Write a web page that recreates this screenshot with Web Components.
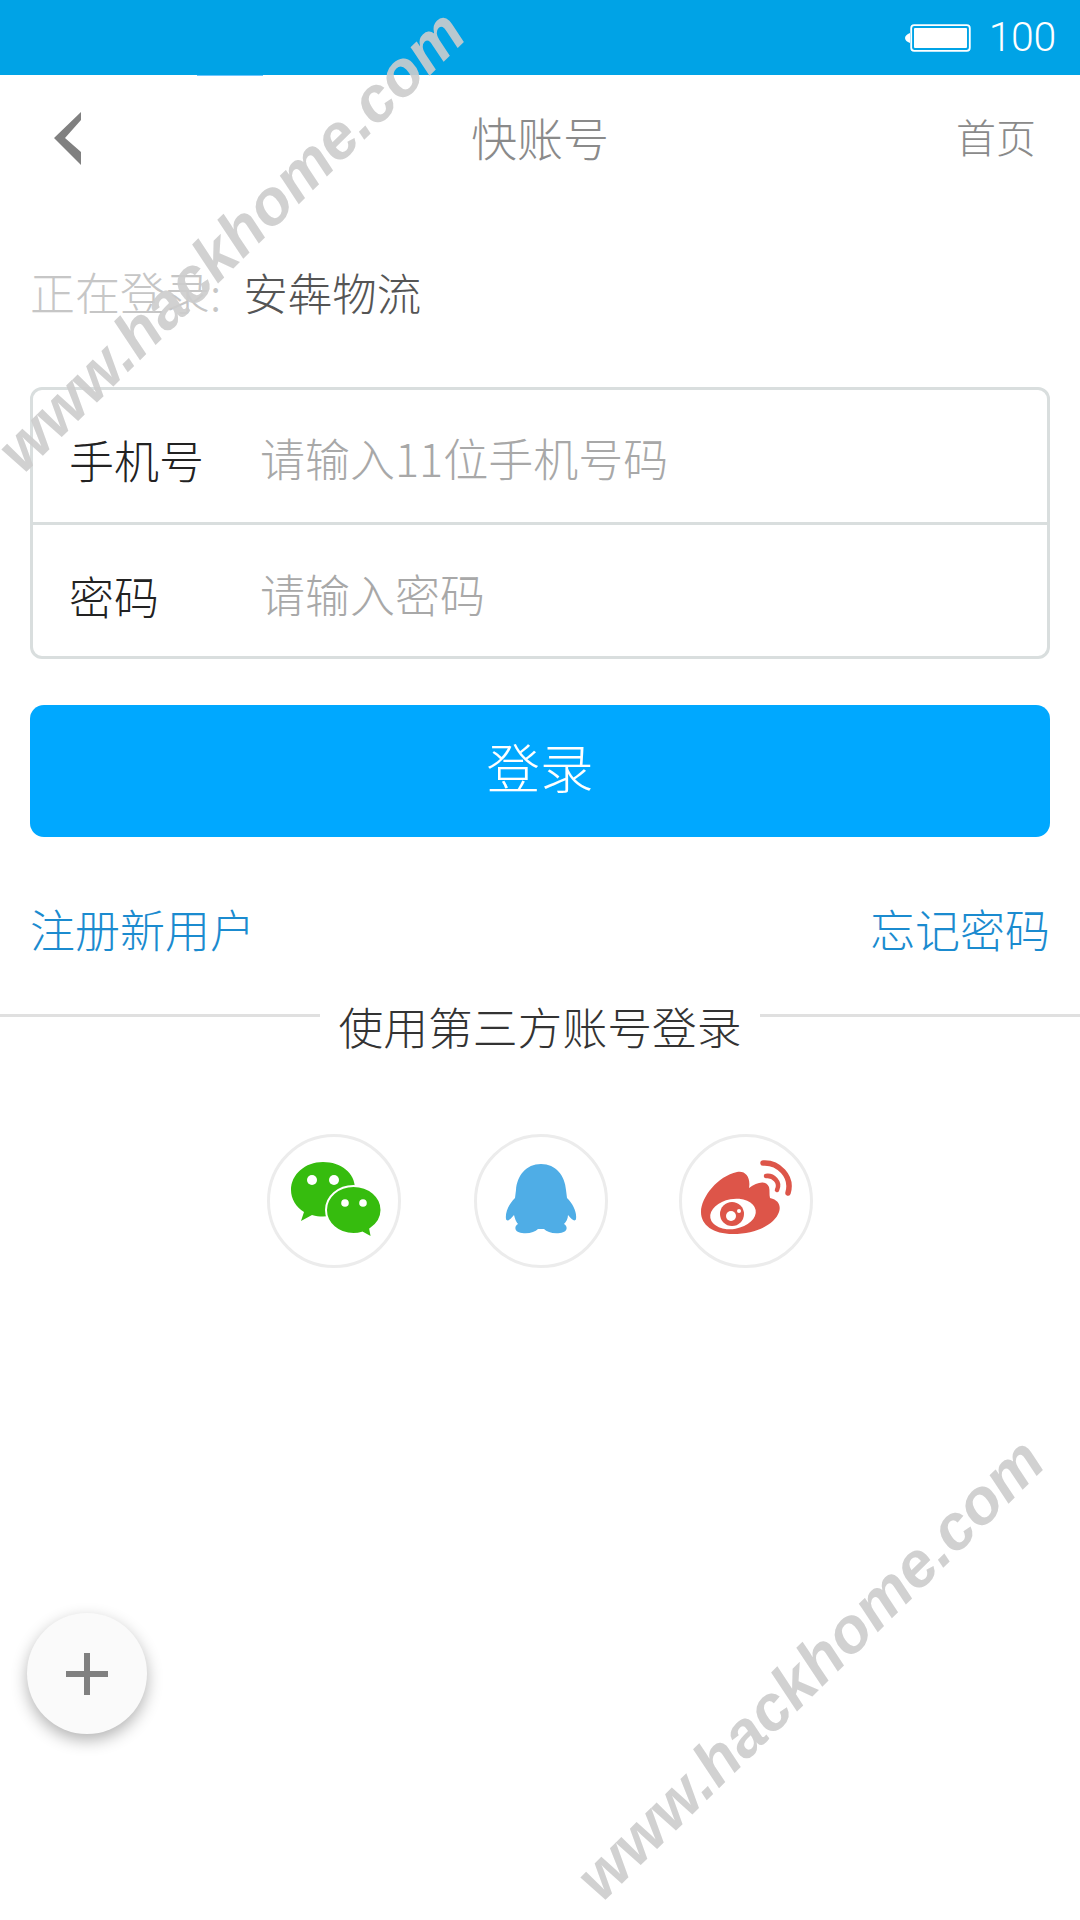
<!DOCTYPE html>
<html lang="zh"><head><meta charset="utf-8"><title>快账号</title>
<style>
html,body{margin:0;padding:0;background:#fff}
body{width:1080px;height:1920px;overflow:hidden;position:relative;font-family:"Noto Sans CJK SC","Noto Sans",sans-serif;font-weight:300}
</style></head><body>
<app-status></app-status>
<app-nav></app-nav>
<login-form></login-form>
<third-party></third-party>
<fab-plus></fab-plus>
<water-mark style="--x:231px;--y:241px"></water-mark>
<water-mark style="--x:810px;--y:1669px"></water-mark>
<script>
function def(name, html){
  customElements.define(name, class extends HTMLElement{
    constructor(){super();this.attachShadow({mode:'open'}).innerHTML=html;}
  });
}
def('app-status',`<style>
:host{display:flex;height:75px;background:#00a3e6;align-items:center;justify-content:flex-end;padding-right:24px;position:relative;box-sizing:border-box}
svg{display:block;margin-right:18px}
span{font:300 41px/75px Roboto,"Open Sans",sans-serif;color:#fff;letter-spacing:-.3px}
i{position:absolute;left:197px;top:75px;width:66px;height:1px;background:#6cc6ff}
</style>
<svg width="66" height="28" viewBox="0 0 66 28"><path d="M5 9C2 10 0 12 0 14s2 4 5 5z" fill="#fff"/><rect x="6.2" y="1.2" width="58.600" height="25.600" rx="3" fill="none" stroke="#fff" stroke-width="1.800"/><rect x="9" y="4" width="53" height="20" rx="1" fill="#fff"/></svg>
<span>100</span><i></i>`);
def('app-nav',`<style>
:host{display:grid;grid-template-columns:1fr auto 1fr;align-items:center;height:126px;color:#8a8a8a}
svg{display:block;margin-left:54px}
.t{font-size:46px;line-height:60px;color:#8a8a8a;margin-top:-5px}
.r{justify-self:end;font-size:40px;line-height:60px;margin:-5px 44px 0 0}
</style>
<svg width="27" height="53" viewBox="0 0 27 53"><polygon points="27,0 0,26 27,53 27,40 11,26 27,8" fill="#808080"/></svg>
<div class="t">快账号</div><div class="r">首页</div>`);
def('login-form',`<style>
:host{display:block;padding:61px 30px 0}
.who{height:60px;line-height:60px;font-size:45px;color:#c6c6c6;display:flex}
.who b{font-weight:300;font-size:44.500px;color:#555;margin-left:22px}
.box{margin-top:65px;height:272px;box-sizing:border-box;border:3px solid #d9dede;border-radius:12px;display:grid;grid-template-rows:132px 1fr}
.row{display:flex;align-items:center;padding-left:36px;font-size:45px;color:#222}
.row+.row{border-top:3px solid #d9dede;padding-top:3px}
.l{width:191px;position:relative;top:3px}
.p{color:#a8a8a8;position:relative;top:1px}
button{display:block;width:100%;height:132px;margin-top:46px;border:0;border-radius:14px;background:#00a8ff;color:#fff;font:300 53.500px/120px "Noto Sans CJK SC",sans-serif;padding:0 0 10px}
.links{display:flex;justify-content:space-between;font-size:45px;line-height:60px;color:#1b8bcf;margin-top:62px}
</style>
<div class="who"><span>正在登录:</span><b>安犇物流</b></div>
<div class="box">
<div class="row"><span class="l">手机号</span><span class="p">请输入11位手机号码</span></div>
<div class="row"><span class="l">密码</span><span class="p">请输入密码</span></div>
</div>
<button>登录</button>
<div class="links"><span>注册新用户</span><span>忘记密码</span></div>`);
def('third-party',`<style>
:host{display:block;margin-top:37px}
.h{display:grid;grid-template-columns:1fr auto 1fr;column-gap:18px;font-size:44.800px;line-height:60px;color:#333}
.h i{display:block;height:3px;background:#e0e0e0;margin-top:18px}
.icons{display:flex;justify-content:center;gap:72px;margin-top:78px}
.c{width:134px;height:134px;border-radius:50%;box-sizing:border-box;border:3px solid #ececec;position:relative}
.c.m{left:1px}
svg{position:absolute;left:-3px;top:-3px;width:134px;height:134px}
</style>
<div class="h"><i></i><span>使用第三方账号登录</span><i></i></div>
<div class="icons">
<div class="c"><svg viewBox="267 1134 134 134">
<path d="M323 1162c-18 0-32 12.500-32 28 0 9 5 17 13 22l-3 9 11-6c4 1 7 1.500 11 1.500 18 0 32-12.500 32-28s-14-26.500-32-26.500z" fill="#36bc0e"/>
<circle cx="312" cy="1180" r="5" fill="#fff"/><circle cx="334" cy="1180" r="5" fill="#fff"/>
<path d="M353.500 1186c-15.200 0-27.500 10.700-27.500 24s12.300 24 27.500 24c3 0 6-.4 8.800-1.300l9.700 5.300-1.800-9c6.800-4.400 11.300-11 11.300-19 0-13.300-12.300-24-28-24z" fill="#36bc0e" stroke="#fff" stroke-width="2"/>
<circle cx="345" cy="1203" r="3.800" fill="#fff"/><circle cx="363" cy="1203" r="3.800" fill="#fff"/>
</svg></div>
<div class="c m"><svg viewBox="474 1134 134 134">
<path d="M541 1164C526 1164 517 1176 516 1190L515 1198C509 1204 505 1212 506 1219C507 1222 510 1220 514 1215C515 1219 516 1222 518 1224C514 1226 514 1232 522 1233C529 1234 535 1232 538 1229L544 1229C547 1232 553 1234 560 1233C568 1232 568 1226 564 1224C566 1222 568 1219 568 1215C572 1220 575 1222 576 1219C577 1212 573 1204 567 1198L566 1190C565 1176 556 1164 541 1164Z" fill="#4fade6"/>
</svg></div>
<div class="c"><svg viewBox="679 1134 134 134">
<path d="M737 1172C745 1170 751 1177 749 1188C757 1182 766 1180 769 1187C770 1191 769 1194 770 1198C779 1200 781 1206 779 1212C775 1224 757 1234 733 1234C713 1234 701 1225 701 1212C701 1197 718 1176 737 1172Z" fill="#dd5549"/>
<ellipse cx="733" cy="1214" rx="23" ry="15" transform="rotate(-10 733 1214)" fill="#fff"/>
<circle cx="732" cy="1214" r="12" fill="#dd5549"/>
<circle cx="731" cy="1216" r="5" fill="#fff"/><circle cx="739" cy="1211" r="2" fill="#fff"/>
<path d="M763 1163C778 1162 793 1176 788 1193" fill="none" stroke="#dd5549" stroke-width="5.500" stroke-linecap="round"/>
<path d="M766 1176C773 1175 781 1182 777 1190" fill="none" stroke="#dd5549" stroke-width="4.500" stroke-linecap="round"/>
</svg></div>
</div>`);
def('fab-plus',`<style>
:host{position:absolute;left:27px;top:1613px;width:120px;height:121px;border-radius:50%;background:#fafafa;box-shadow:0 6px 16px rgba(0,0,0,.3);display:block}
svg{position:absolute;left:39px;top:40px}
</style>
<svg width="42" height="42" viewBox="0 0 42 42"><path d="M18 0h6v18h18v6H24v18h-6V24H0v-6h18z" fill="#808080"/></svg>`);
def('water-mark',`<style>
:host{position:absolute;left:var(--x);top:var(--y);display:block;width:0;height:0;pointer-events:none}
span{position:absolute;left:0;top:0;transform:translate(-50%,-50%) rotate(-44.500deg);font:italic 700 63.500px/1 "Liberation Sans",sans-serif;color:#cdcdcd;opacity:.9;white-space:nowrap}
</style><span>www.hackhome.com</span>`);
</script>
</body></html>
